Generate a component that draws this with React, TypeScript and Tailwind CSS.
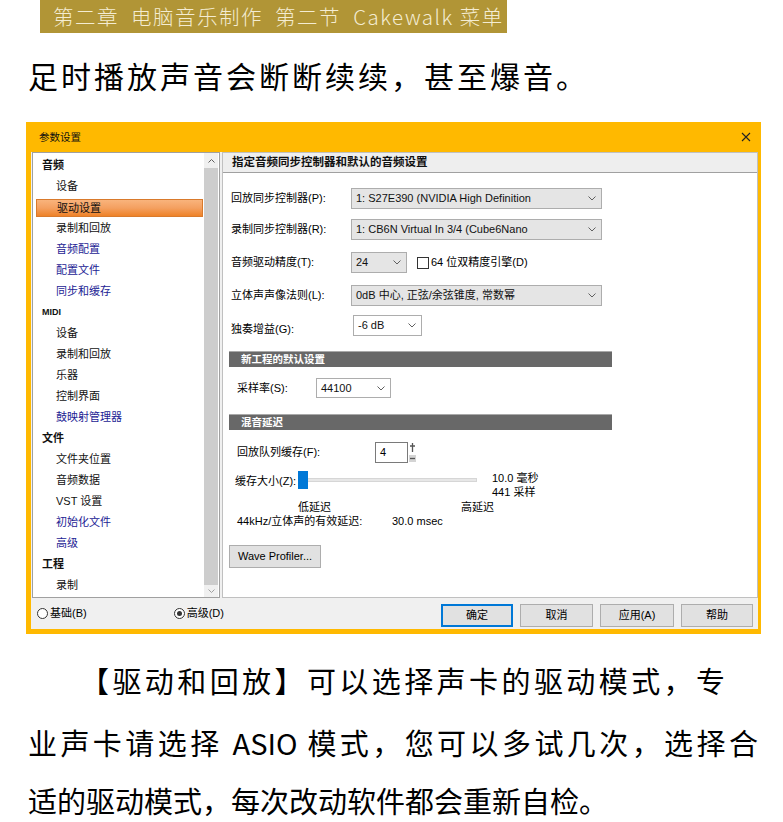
import React from "react";

const Chevron = ({ className = "" }: { className?: string }) => (
  <svg width="8" height="5" viewBox="0 0 8 5" className={className}>
    <path d="M0.5 0.5 L4 4 L7.5 0.5" fill="none" stroke="#606060" strokeWidth="1" />
  </svg>
);

type Item = { t: string; g?: boolean; blue?: boolean; sel?: boolean; small?: boolean };

const items: Item[] = [
  { t: "音频", g: true },
  { t: "设备" },
  { t: "驱动设置", sel: true },
  { t: "录制和回放" },
  { t: "音频配置", blue: true },
  { t: "配置文件", blue: true },
  { t: "同步和缓存", blue: true },
  { t: "MIDI", g: true, small: true },
  { t: "设备" },
  { t: "录制和回放" },
  { t: "乐器" },
  { t: "控制界面" },
  { t: "鼓映射管理器", blue: true },
  { t: "文件", g: true },
  { t: "文件夹位置" },
  { t: "音频数据" },
  { t: "VST 设置" },
  { t: "初始化文件", blue: true },
  { t: "高级", blue: true },
  { t: "工程", g: true },
  { t: "录制" },
];

function Select({ w, text, white = false, h = 21 }: { w: number; text: string; white?: boolean; h?: number }) {
  return (
    <div
      className={`flex items-center justify-between border border-[#adadad] pl-[4px] pr-[5px] ${white ? "bg-white" : "bg-[#e5e5e5]"}`}
      style={{ width: w, height: h }}
    >
      <span className="whitespace-nowrap text-[#111]">{text}</span>
      <Chevron />
    </div>
  );
}

function SectionBar({ title }: { title: string }) {
  return (
    <div className="ml-[6px] w-[383px] h-[16px] bg-[#686868] border-t border-[#a9a9a9] flex items-center pl-[12px] text-white font-bold text-[10.5px]">
      {title}
    </div>
  );
}

function Btn({ w, label, primary = false }: { w: number; label: string; primary?: boolean }) {
  return (
    <div
      className={`h-[23px] flex items-center justify-center bg-[#e1e1e1] ${primary ? "border-2 border-[#0078d7]" : "border border-[#adadad]"}`}
      style={{ width: w }}
    >
      {label}
    </div>
  );
}

export default function App() {
  return (
    <div className="w-[783px] h-[822px] bg-white overflow-hidden font-['Noto_Sans_CJK_SC',sans-serif] text-black">
      {/* banner */}
      <div className="ml-[40px] w-[467px] h-[33px] bg-[#b19536] flex items-center pl-[13px] text-[20.5px] leading-none text-[#f4ecd2] font-light tracking-[1.5px] whitespace-pre">
        第二章  电脑音乐制作  第二节  Cakewalk 菜单
      </div>

      <div className="mt-[24px] ml-[28px] h-[36px] leading-[36px] text-[30px] tracking-[3px] whitespace-nowrap">
        足时播放声音会断断续续，甚至爆音。
      </div>

      {/* dialog */}
      <div className="mt-[29px] ml-[26px] w-[735px] h-[512px] bg-[#ffb900] flex flex-col font-['Liberation_Sans','Noto_Sans_CJK_SC',sans-serif] text-[11px] leading-none">
        <div className="h-[30px] flex items-center justify-between pl-[13px] pr-[10px]">
          <span className="text-[10.5px] text-[#111]">参数设置</span>
          <svg width="10" height="10" viewBox="0 0 10 10">
            <path d="M1 1 L9 9 M9 1 L1 9" stroke="#222" strokeWidth="1.1" />
          </svg>
        </div>
        <div className="ml-[5px] mr-[3px] h-[477px] bg-[#f0f0f0] flex flex-col">
          <div className="h-[446px] flex pl-[1px]">
            {/* left tree */}
            <div className="w-[188px] h-[446px] border border-[#a0a0a0] bg-white flex">
              <div className="flex-1 flex flex-col pt-[2px]">
                {items.map((it, i) =>
                  it.sel ? (
                    <div key={i} className="h-[21px] pt-[2px] pb-[1px] pl-[3px] pr-[1px]">
                      <div className="h-full flex items-center pl-[20px] border border-[#d97a2c] bg-[linear-gradient(#f9b47c,#f4a060_50%,#ee8228)] text-[#111]">
                        {it.t}
                      </div>
                    </div>
                  ) : (
                    <div
                      key={i}
                      className={`h-[21px] flex items-center ${it.g ? "pl-[9px] font-bold" : "pl-[23px]"} ${it.small ? "text-[9px]" : ""} ${it.blue ? "text-[#1c1c94]" : "text-[#111]"}`}
                    >
                      {it.t}
                    </div>
                  )
                )}
              </div>
              <div className="w-[14px] mr-[1px] flex flex-col">
                <div className="h-[15px] bg-[#f0f0f0] flex items-center justify-center">
                  <svg width="7" height="4" viewBox="0 0 7 4">
                    <path d="M0.5 3.5 L3.5 0.5 L6.5 3.5" fill="none" stroke="#606060" strokeWidth="1" />
                  </svg>
                </div>
                <div className="flex-1 bg-[#cdcdcd]" />
                <div className="h-[12px] bg-[#f0f0f0] flex items-center justify-center">
                  <svg width="7" height="4" viewBox="0 0 7 4">
                    <path d="M0.5 0.5 L3.5 3.5 L6.5 0.5" fill="none" stroke="#a0a0a0" strokeWidth="1" />
                  </svg>
                </div>
              </div>
            </div>

            {/* right pane */}
            <div className="ml-[2px] w-[536px] h-[446px] border border-[#c0c0c0] bg-white flex flex-col">
              <div className="h-[20px] bg-[#eeeeee] border-b border-[#a0a0a0] flex items-center pl-[9px] font-bold text-[11.5px] text-[#111]">
                指定音频同步控制器和默认的音频设置
              </div>

              <div className="mt-[15px] ml-[8px] flex items-center h-[21px]">
                <span className="w-[120px]">回放同步控制器(P):</span>
                <Select w={251} text="1: S27E390 (NVIDIA High Definition" />
              </div>
              <div className="mt-[10px] ml-[8px] flex items-center h-[21px]">
                <span className="w-[120px]">录制同步控制器(R):</span>
                <Select w={251} text="1: CB6N Virtual In 3/4 (Cube6Nano" />
              </div>
              <div className="mt-[12px] ml-[8px] flex items-center h-[21px]">
                <span className="w-[120px]">音频驱动精度(T):</span>
                <Select w={56} text="24" />
                <div className="ml-[10px] w-[12px] h-[12px] border border-[#333] bg-white" />
                <span className="ml-[2px]">64 位双精度引擎(D)</span>
              </div>
              <div className="mt-[12px] ml-[8px] flex items-center h-[21px]">
                <span className="w-[120px]">立体声声像法则(L):</span>
                <Select w={251} text="0dB 中心, 正弦/余弦锥度, 常数幂" />
              </div>
              <div className="mt-[9px] ml-[8px] flex items-end h-[21px]">
                <span className="w-[122px] pb-[1px]">独奏增益(G):</span>
                <Select w={69} text="-6 dB" white />
              </div>

              <div className="mt-[15px]">
                <SectionBar title="新工程的默认设置" />
              </div>
              <div className="mt-[11px] ml-[14px] flex items-center h-[20px]">
                <span className="w-[79px]">采样率(S):</span>
                <Select w={75} h={20} text="44100" white />
              </div>

              <div className="mt-[16px]">
                <SectionBar title="混音延迟" />
              </div>
              <div className="mt-[12px] ml-[14px] flex items-center h-[21px]">
                <span className="w-[138px]">回放队列缓存(F):</span>
                <div className="w-[33px] h-[21px] border border-[#7a7a7a] bg-white flex items-center pl-[4px]">4</div>
                <div className="w-[9px] h-[21px] flex flex-col items-center justify-between py-[1px]">
                  <svg width="7" height="9" viewBox="0 0 7 9">
                    <path d="M3.5 0 L3.5 9 M1 3 L6 3" stroke="#555" strokeWidth="1.3" />
                  </svg>
                  <svg width="7" height="7" viewBox="0 0 7 7">
                    <rect x="0" y="0" width="7" height="7" fill="#d4d4d4" />
                    <path d="M1 3.5 L6 3.5" stroke="#555" strokeWidth="1.3" />
                  </svg>
                </div>
              </div>

              <div className="mt-[8px] ml-[12px] flex h-[28px]">
                <span className="w-[63px] pt-[5px]">缓存大小(Z):</span>
                <div className="relative w-[179px] h-[18px]">
                  <div className="absolute left-[7px] right-0 top-[7px] h-[4px] bg-[#e7e7e7] border border-[#d6d6d6]" />
                  <div className="absolute left-0 top-0 w-[10px] h-[18px] bg-[#0078d7]" />
                </div>
                <div className="ml-[15px] flex flex-col">
                  <span className="h-[14px] leading-[14px]">10.0 毫秒</span>
                  <span className="h-[14px] leading-[14px]">441 采样</span>
                </div>
              </div>
              <div className="mt-[1px] flex h-[14px] items-center">
                <span className="ml-[75px] w-[163px]">低延迟</span>
                <span>高延迟</span>
              </div>
              <div className="ml-[14px] flex h-[14px] items-center">
                <span className="w-[155px]">44kHz/立体声的有效延迟:</span>
                <span>30.0 msec</span>
              </div>
              <div className="mt-[17px] ml-[6px] w-[92px] h-[23px] bg-[#e1e1e1] border border-[#adadad] flex items-center justify-center">
                Wave Profiler...
              </div>
            </div>
          </div>

          {/* bottom bar */}
          <div className="h-[31px] flex items-center">
            <div className="ml-[6px] flex items-center">
              <div className="w-[11px] h-[11px] rounded-full border border-[#333] bg-white" />
              <span className="ml-[2px]">基础(B)</span>
            </div>
            <div className="ml-[87px] flex items-center">
              <div className="w-[11px] h-[11px] rounded-full border border-[#333] bg-white flex items-center justify-center">
                <div className="w-[5px] h-[5px] rounded-full bg-[#333]" />
              </div>
              <span className="ml-[2px]">高级(D)</span>
            </div>
            <div className="ml-auto mr-[5px] mt-[3px] flex gap-[7px]">
              <Btn w={72} label="确定" primary />
              <Btn w={73} label="取消" />
              <Btn w={74} label="应用(A)" />
              <Btn w={72} label="帮助" />
            </div>
          </div>
        </div>
      </div>

      {/* bottom paragraph */}
      <div className="mt-[15px] text-[29px] leading-[62px] whitespace-nowrap">
        <div className="ml-[80px] w-[645px] text-justify [text-align-last:justify]">【驱动和回放】可以选择声卡的驱动模式，专</div>
        <div className="ml-[28px] w-[730px] text-justify [text-align-last:justify]">业声卡请选择 ASIO 模式，您可以多试几次，选择合</div>
        <div className="ml-[28px] mt-[9px] leading-[36px]">适的驱动模式，每次改动软件都会重新自检。</div>
      </div>
    </div>
  );
}
